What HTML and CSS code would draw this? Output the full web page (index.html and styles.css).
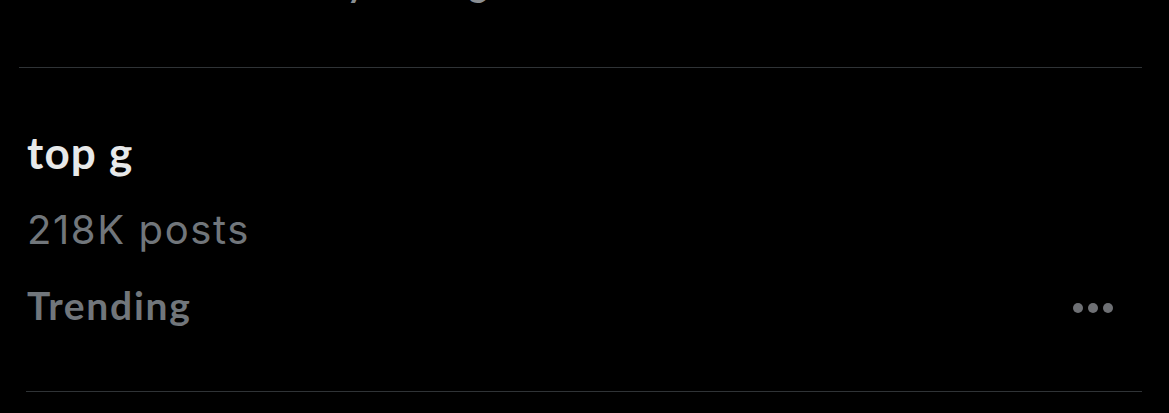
FILE: index.html
```html
<!DOCTYPE html>
<html lang="en">
<head>
<meta charset="utf-8">
<title>Trend</title>
<link rel="stylesheet" href="styles.css">
</head>
<body>
<div class="page">
  <div class="prev">
    <span class="prev-text">Followed by his king</span>
  </div>
  <div class="divider divider-top"></div>
  <div class="trend">
    <div class="title">top g</div>
    <div class="count">218K posts</div>
    <div class="meta">
      <span class="label">Trending</span>
      <svg class="more" width="44" height="12" viewBox="0 0 44 12" aria-hidden="true">
        <circle cx="7" cy="6" r="5"/>
        <circle cx="22" cy="6" r="5"/>
        <circle cx="37" cy="6" r="5"/>
      </svg>
    </div>
  </div>
  <div class="divider divider-bottom"></div>
</div>
</body>
</html>
```
FILE: styles.css
```css
html, body {
  margin: 0;
  padding: 0;
  background: #000;
}
body {
  width: 1169px;
  height: 413px;
  overflow: hidden;
}
.page {
  display: flex;
  flex-direction: column;
}
.prev {
  height: 67px;
  overflow: hidden;
  padding-left: 181px;
  flex-shrink: 0;
}
.prev-text {
  display: block;
  margin-top: -38px;
  font-family: Lato, "Liberation Sans", sans-serif;
  font-weight: 700;
  font-size: 35px;
  line-height: 42px;
  letter-spacing: -0.4px;
  color: #8b8f93;
}
.divider {
  height: 1px;
  background: #2f3336;
  margin-right: 27px;
  flex-shrink: 0;
}
.divider-top {
  margin-left: 19px;
}
.divider-bottom {
  margin-left: 26px;
}
.trend {
  padding: 60px 27px 0 27px;
  height: 323px;
  box-sizing: border-box;
  display: flex;
  flex-direction: column;
  flex-shrink: 0;
}
.title {
  font-family: Lato, "Liberation Sans", sans-serif;
  font-weight: 700;
  font-size: 44px;
  line-height: 48px;
  letter-spacing: 1.2px;
  color: #e7e9ea;
}
.count {
  margin-top: 31px;
  font-family: Inter, "Liberation Sans", sans-serif;
  font-size: 40px;
  line-height: 46px;
  letter-spacing: 1.6px;
  color: #71767b;
}
.meta {
  margin-top: 31px;
  display: flex;
  justify-content: space-between;
  align-items: center;
}
.label {
  font-family: Lato, "Liberation Sans", sans-serif;
  font-weight: 700;
  font-size: 39px;
  line-height: 42px;
  letter-spacing: 1.7px;
  color: #71767b;
}
.more {
  fill: #6e7074;
  margin-right: 27px;
  margin-top: 6px;
}
```
